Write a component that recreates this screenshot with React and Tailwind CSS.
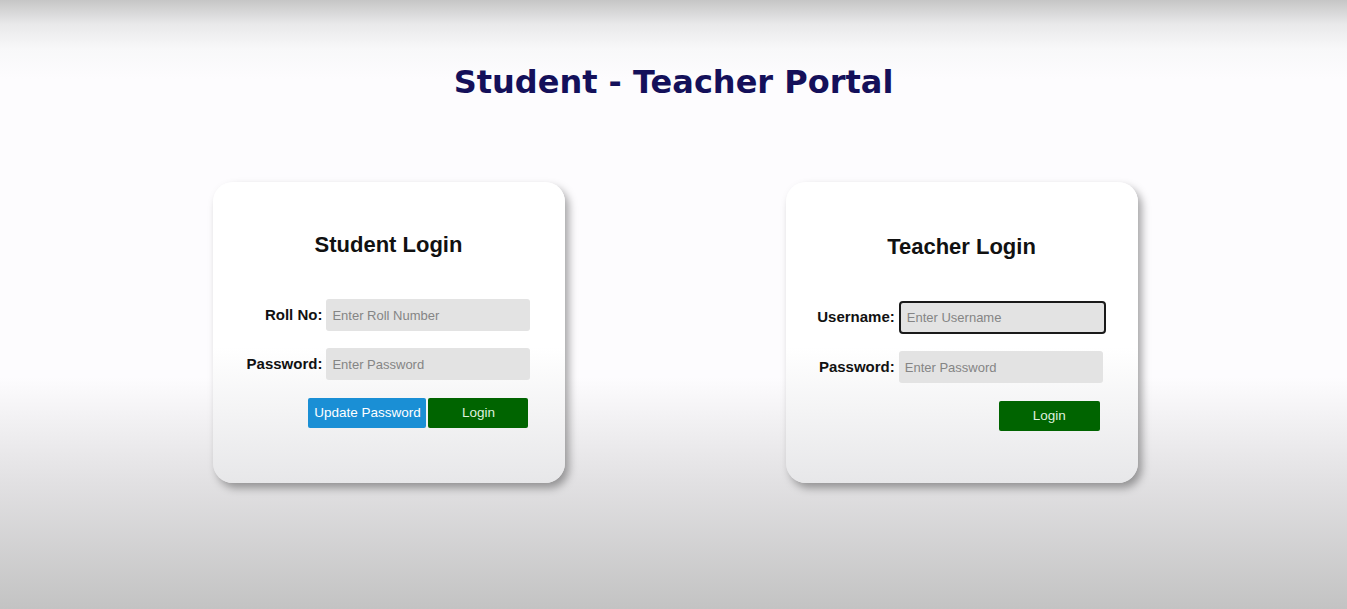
import React from 'react';

const LoginCard = ({ title, fields, buttons, titleClass, buttonRowClass }) => {
  return (
    <div className="w-[352px] h-[301px] rounded-[20px] bg-[linear-gradient(to_bottom,#ffffff_0%,#ffffff_55%,#e7e7e9_100%)] shadow-[4px_5px_9px_rgba(0,0,0,0.35)] flex flex-col items-center">
      <h2 className={`text-[22px] leading-[26px] font-bold text-[#111] ${titleClass}`}>{title}</h2>
      <div className="grid grid-cols-[auto_auto] items-center gap-x-[4px] gap-y-[17px]">
        {fields.map((f) => (
          <React.Fragment key={f.label}>
            <label className="text-right text-[15px] font-bold text-[#111]">{f.label}</label>
            <input
              type="text"
              placeholder={f.placeholder}
              className={`h-[32px] rounded-[3px] bg-[#e3e3e3] px-[6px] text-[13px] text-[#333] placeholder:text-[#858585] outline-none ${f.focused ? 'w-[207px] h-[33px] border-2 border-[#1a1a1a] rounded-[4px] px-[4px]' : 'w-[204px]'}`}
            />
          </React.Fragment>
        ))}
        <div className={`col-span-2 flex justify-end gap-[2px] mt-px ${buttonRowClass}`}>
          {buttons}
        </div>
      </div>
    </div>
  );
};

export default function App() {
  return (
    <div
      className="h-screen w-full flex flex-col items-center bg-[linear-gradient(to_bottom,#c6c6c6_0%,#e9e9ea_4%,#f8f8f9_8%,#fdfcfe_13%,#fdfcfe_62%,#e2e1e3_79%,#c3c3c3_100%)]"
      style={{ fontFamily: '"Liberation Sans", Arial, sans-serif' }}
    >
      <h1 className="mt-[63px] text-[32px] leading-[38px] font-bold text-[#14105a] font-['DejaVu_Sans',Verdana,sans-serif]">
        Student - Teacher Portal
      </h1>

      <div className="mt-[81px] ml-[3px] flex gap-[221px]">
        <LoginCard
          title="Student Login"
          titleClass="mt-[50px] mb-[41px]"
          buttonRowClass="pr-[2px]"
          fields={[
            { label: 'Roll No:', placeholder: 'Enter Roll Number' },
            { label: 'Password:', placeholder: 'Enter Password' },
          ]}
          buttons={
            <>
              <button className="w-[118px] h-[30px] rounded-[2px] bg-[#1a8fd5] text-white text-[13.5px]">Update Password</button>
              <button className="w-[100px] h-[30px] rounded-[2px] bg-[#006400] text-[#dff0df] text-[13.5px]">Login</button>
            </>
          }
        />
        <LoginCard
          title="Teacher Login"
          titleClass="mt-[52px] mb-[41px]"
          buttonRowClass="pr-[6px]"
          fields={[
            { label: 'Username:', placeholder: 'Enter Username', focused: true },
            { label: 'Password:', placeholder: 'Enter Password' },
          ]}
          buttons={
            <button className="w-[101px] h-[30px] rounded-[2px] bg-[#006400] text-[#dff0df] text-[13.5px]">Login</button>
          }
        />
      </div>
    </div>
  );
}
